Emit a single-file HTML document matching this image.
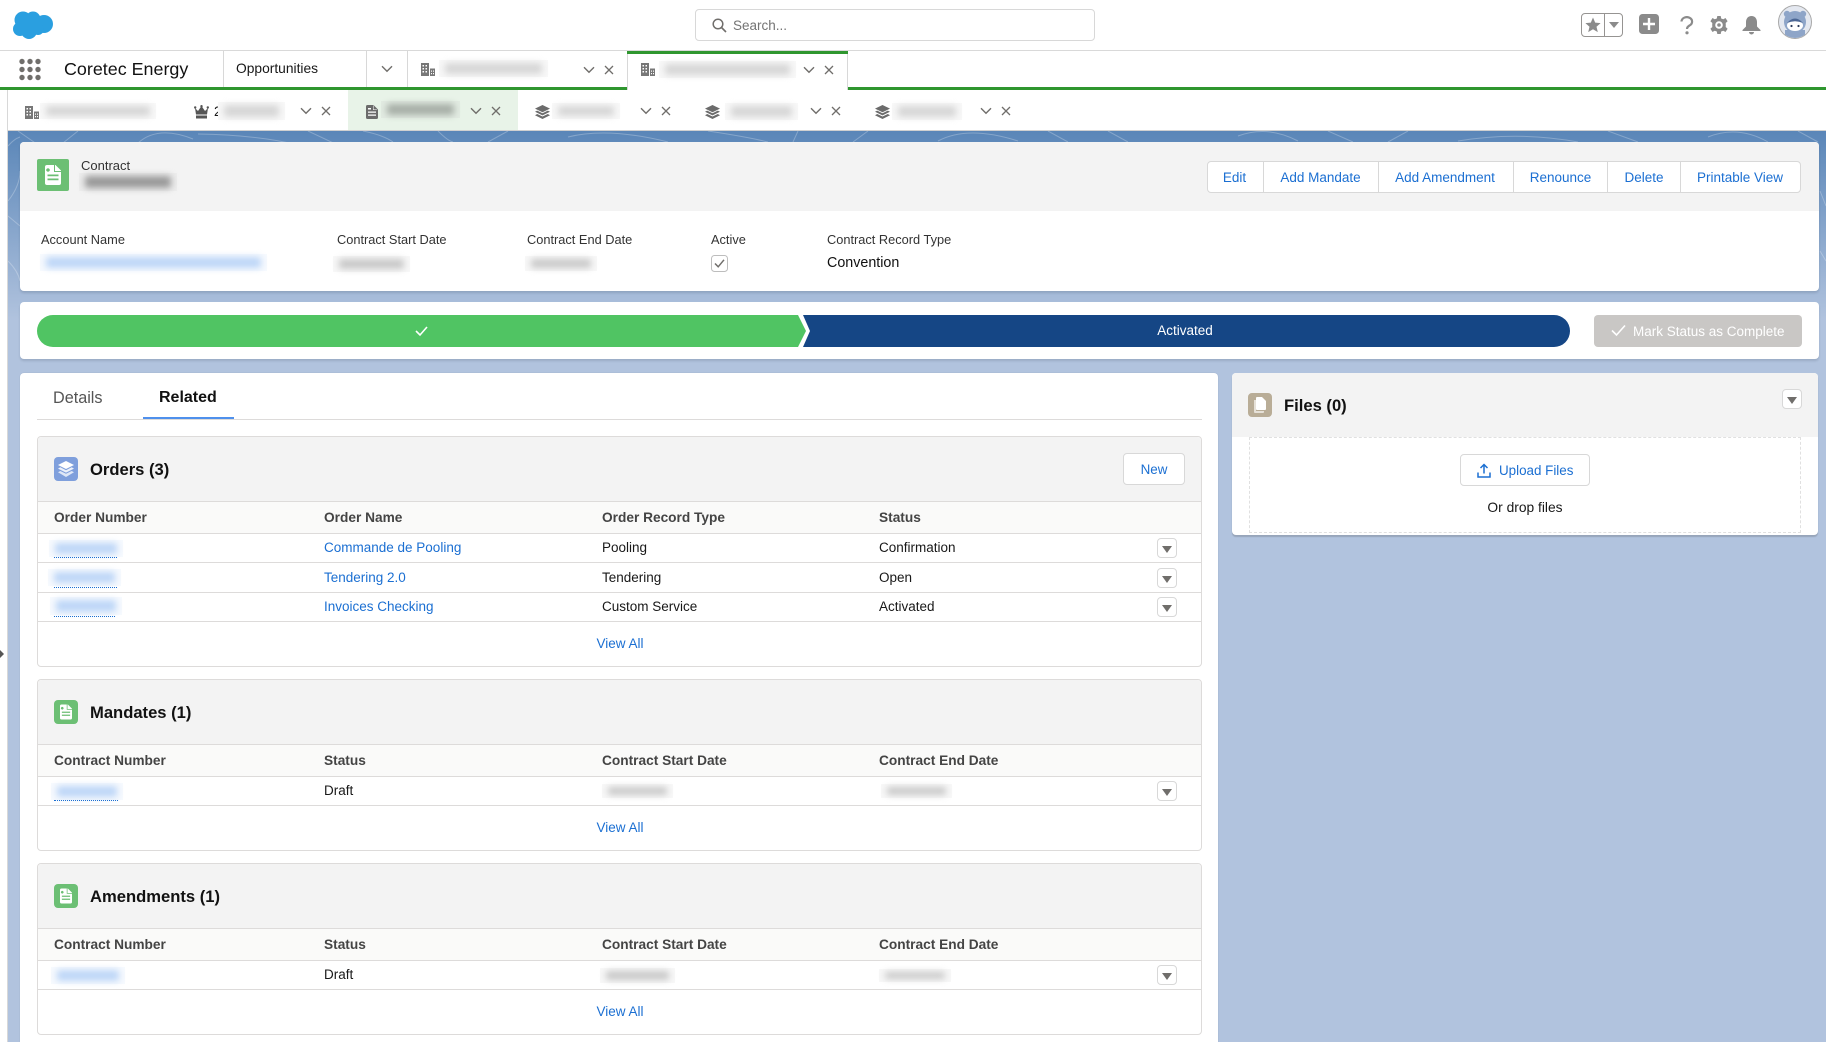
<!DOCTYPE html>
<html><head><meta charset="utf-8"><title>Contract</title>
<style>
html,body{margin:0;padding:0;background:#fff}
html{overflow:hidden}
body{position:relative;width:1826px;height:1042px;overflow:hidden;font-family:"Liberation Sans",sans-serif;font-size:13px;color:#181818}
div,span,i,a,svg{position:absolute;display:block}
.t{line-height:20px;white-space:nowrap;transform:translateY(1px)}
.lnk{color:#1b6fd2}
.t.h{font-weight:bold;color:#444;font-size:13.7px;transform:none}
.c{font-size:13.5px}
.t.lab{font-size:12.8px;color:#333;transform:none}
.t.ct{font-weight:bold;font-size:16.6px;color:#111;transform:translateY(1px)}
.bl{overflow:visible}
.bl::before{content:"";position:absolute;left:6px;right:6px;top:3px;bottom:3px;filter:blur(3.5px);background:var(--c,#c8c8c8);border-radius:2px}
.tb{background:#f8f8f8;--c:#d6d6d6}
.gr{background:#f8f8f8;--c:#c8c8c8}
.dk{background:#ededed;--c:#999}
.bu{background:#f7fafe;--c:#bdd6f7}
.card{background:#fff;border-radius:4px;box-shadow:0 2px 2px rgba(40,50,70,.16)}
.line{background:#dddbda;height:1px}
.sec{left:37px;width:1165px;background:#fff;border:1px solid #dddbda;border-radius:4px;box-sizing:border-box}
.band{left:38px;width:1163px;background:#f3f3f3}
.th{left:38px;width:1163px;background:#fafaf9}
.dd{width:20px;height:20px;box-sizing:border-box;background:#fff;border:1px solid #d8d8d8;border-radius:4px}
.dd::after{content:"";position:absolute;left:4px;top:7px;border-left:5px solid transparent;border-right:5px solid transparent;border-top:7px solid #706e6b}
.dot{left:54px;height:0;border-top:1px dotted #1b6fd2}
.btn{background:#fff;border:1px solid #d8d8d8;border-radius:4px;box-sizing:border-box}
.sep{width:1px;background:#d8d8d8}
.ic{border-radius:4px}
</style></head><body>

<svg width="0" height="0" style="left:0;top:0">
<defs>
<symbol id="chev" viewBox="0 0 12 8"><path d="M1 1.200L6 6.200L11 1.200" fill="none" stroke="#706e6b" stroke-width="1.400"/></symbol>
<symbol id="x" viewBox="0 0 10 10"><path d="M1 1L9 9M9 1L1 9" fill="none" stroke="#706e6b" stroke-width="1.300"/></symbol>
<symbol id="bld" viewBox="0 0 14 13"><path fill="#777" d="M0 0H8V13H0Z"/><path fill="#777" d="M9 5.500H14V13H9Z"/><path fill="#fff" d="M1.500 2H3V3.500H1.500ZM4.500 2H6V3.500H4.500ZM1.500 5H3V6.500H1.500ZM4.500 5H6V6.500H4.500ZM1.500 8H3V9.500H1.500ZM4.500 8H6V9.500H4.500ZM10 7.500H11V8.800H10ZM12 7.500H13V8.800H12ZM10 10H11V11.300H10ZM12 10H13V11.300H12Z"/></symbol>
<symbol id="stack" viewBox="0 0 15 14"><path fill="#6b6b6b" d="M7.500 0L15 3.600L7.500 7.200L0 3.600Z"/><path fill="#6b6b6b" d="M2.200 5.600L7.500 8.200L12.800 5.600L15 6.800L7.500 10.400L0 6.800Z"/><path fill="#6b6b6b" d="M2.200 9L7.500 11.500L12.800 9L15 10.200L7.500 14L0 10.200Z"/></symbol>
<symbol id="doc" viewBox="0 0 12 14"><path fill="#6b6b6b" d="M1.500 0H7.500L12 4.500V12.500A1.500 1.500 0 0 1 10.500 14H1.500A1.500 1.500 0 0 1 0 12.500V1.500A1.500 1.500 0 0 1 1.500 0Z"/><path fill="#fff" d="M2 6.500H10V7.700H2ZM2 9.500H10V10.700H2ZM2 3H5V4.500H2Z"/><path fill="#fff" d="M7.500 0.500V4.500H11.500L10.500 5H7V0.500Z"/></symbol>
<symbol id="wdoc" viewBox="0 0 16 20"><path fill="#fff" d="M2 0H10.500L16 5.500V18A2 2 0 0 1 14 20H2A2 2 0 0 1 0 18V2A2 2 0 0 1 2 0Z"/><path fill="currentColor" d="M2.500 9.500H13.500V11.200H2.500ZM2.500 13.500H13.500V15.200H2.500ZM3 3.200A1.800 1.800 0 1 0 3.010 3.200ZM10 0V6H16V7H9V0Z"/></symbol>
<symbol id="wstack" viewBox="0 0 16 16"><path fill="#fff" d="M8 0L16 4L8 8L0 4Z"/><path fill="#fff" d="M2.300 6.300L8 9.200L13.700 6.300L16 7.600L8 11.600L0 7.600Z" opacity=".85"/><path fill="#fff" d="M2.300 10L8 12.800L13.700 10L16 11.300L8 16L0 11.300Z" opacity=".75"/></symbol>
</defs></svg>

<!-- top bar -->
<svg style="left:10px;top:8px" width="46" height="34" viewBox="10 8 46 34"><g fill="#2a9fe0"><circle cx="23" cy="20" r="8.500"/><circle cx="33" cy="19" r="7.500"/><circle cx="44" cy="24" r="9"/><circle cx="20" cy="29" r="7"/><circle cx="29" cy="31" r="8"/><circle cx="38" cy="29" r="6"/><rect x="20" y="18" width="22" height="12"/></g></svg>

<div style="left:695px;top:9px;width:400px;height:32px;box-sizing:border-box;border:1px solid #d8d8d8;border-radius:4px;background:#fff"></div>
<svg style="left:712px;top:18px" width="15" height="15" viewBox="0 0 15 15"><circle cx="6" cy="6" r="4.800" fill="none" stroke="#706e6b" stroke-width="1.500"/><path d="M9.500 9.500L14 14" stroke="#706e6b" stroke-width="1.600"/></svg>
<span class="t" style="left:733px;top:15px;font-size:13.500px;color:#747474">Search...</span>

<!-- right icons -->
<div style="left:1581px;top:13px;width:42px;height:24px;box-sizing:border-box;border:1px solid #969492;border-radius:4px"></div>
<div class="sep" style="left:1604px;top:13px;height:24px;background:#969492"></div>
<svg style="left:1585px;top:17px" width="16" height="16" viewBox="0 0 16 16"><path fill="#8b8b8b" d="M8 0.500L10.200 5.600L15.600 6.100L11.500 9.700L12.800 15.100L8 12.200L3.200 15.100L4.500 9.700L0.400 6.100L5.800 5.600Z"/></svg>
<svg style="left:1609px;top:22px" width="10" height="7" viewBox="0 0 10 7"><path fill="#8b8b8b" d="M0 0H10L5 6Z"/></svg>
<svg style="left:1639px;top:14px" width="20" height="20" viewBox="0 0 20 20"><rect width="20" height="20" rx="3.500" fill="#8b8b8b"/><path d="M10 4V16M4 10H16" stroke="#fff" stroke-width="2.400"/></svg>
<svg style="left:1680px;top:16px" width="14" height="19" viewBox="0 0 14 19"><path d="M1.500 5.500A5.300 4.500 0 1 1 9.500 9.500C7.800 10.500 7 11.200 7 13" fill="none" stroke="#8b8b8b" stroke-width="2.200"/><circle cx="7" cy="16.800" r="1.600" fill="#8b8b8b"/></svg>
<svg style="left:1710px;top:16px" width="18" height="18" viewBox="0 0 18 18"><path fill="#8b8b8b" d="M7.300 0H10.700L11.200 2.500L13.300 3.300L15.500 2L17.600 5.300L15.700 7L15.800 9L15.700 11L17.600 12.700L15.500 16L13.300 14.700L11.200 15.500L10.700 18H7.300L6.800 15.500L4.700 14.700L2.500 16L0.400 12.700L2.300 11L2.200 9L2.300 7L0.400 5.300L2.500 2L4.700 3.300L6.800 2.500Z"/><circle cx="9" cy="9" r="3.800" fill="#fff"/><circle cx="9" cy="9" r="1.800" fill="#8b8b8b"/></svg>
<svg style="left:1742px;top:16px" width="19" height="19" viewBox="0 0 19 19"><path fill="#8b8b8b" d="M9.500 0C13 0 15 2.800 15 6V10.500L18.500 14V15H0.500V14L4 10.500V6C4 2.800 6 0 9.500 0ZM7 16H12A2.500 2.500 0 0 1 7 16Z"/></svg>
<svg style="left:1778px;top:5px" width="34" height="34" viewBox="0 0 34 34"><defs><clipPath id="av"><circle cx="17" cy="17" r="16"/></clipPath></defs><circle cx="17" cy="17" r="16.500" fill="#e4e8f0" stroke="#a8a8a8"/><g clip-path="url(#av)"><circle cx="9" cy="9" r="3.200" fill="#8ea5c8"/><circle cx="25" cy="9" r="3.200" fill="#8ea5c8"/><circle cx="17" cy="17" r="11" fill="#8ea5c8"/><rect x="7" y="25" width="20" height="9" fill="#8ea5c8"/><ellipse cx="17" cy="20.500" rx="8" ry="5.500" fill="#fff"/><path d="M9 18Q17 9 25 18Q17 14.500 9 18Z" fill="#4c6795"/><circle cx="13.500" cy="21" r="1.100" fill="#2b3b5b"/><circle cx="20.500" cy="21" r="1.100" fill="#2b3b5b"/></g></svg>

<div class="line" style="left:0;top:50px;width:1826px;height:1px;background:#d9d9d9"></div>

<!-- nav row -->
<svg style="left:18px;top:58px" width="24" height="24" viewBox="0 0 24 24"><g fill="#706e6b"><circle cx="4" cy="3.500" r="2.700"/><circle cx="12" cy="3.500" r="2.700"/><circle cx="20" cy="3.500" r="2.700"/><circle cx="4" cy="11.500" r="2.700"/><circle cx="12" cy="11.500" r="2.700"/><circle cx="20" cy="11.500" r="2.700"/><circle cx="4" cy="19.500" r="2.700"/><circle cx="12" cy="19.500" r="2.700"/><circle cx="20" cy="19.500" r="2.700"/></g></svg>
<span class="t" style="left:64px;top:59px;font-size:17.900px;color:#111;transform:none">Coretec Energy</span>
<div class="sep" style="left:223px;top:51px;height:36px"></div>
<span class="t" style="left:236px;top:58px;font-size:13.800px;color:#181818">Opportunities</span>
<div class="sep" style="left:366px;top:51px;height:36px"></div>
<svg style="left:381px;top:65px" width="12" height="8"><use href="#chev"/></svg>
<div class="sep" style="left:407px;top:51px;height:36px"></div>
<svg style="left:421px;top:63px" width="14" height="13"><use href="#bld"/></svg>
<i class="bl tb" style="left:439px;top:60px;width:109px;height:17px"></i>
<svg style="left:583px;top:66px" width="12" height="8"><use href="#chev"/></svg>
<svg style="left:604px;top:65px" width="10" height="10"><use href="#x"/></svg>

<div style="left:0;top:87px;width:1826px;height:3px;background:#2f962f"></div>
<div style="left:627px;top:51px;width:221px;height:39px;background:#fff;border-left:1px solid #d8d8d8;border-right:1px solid #d8d8d8;box-sizing:border-box"></div>
<div style="left:627px;top:51px;width:221px;height:3px;background:#2f962f"></div>
<svg style="left:641px;top:63px" width="14" height="13"><use href="#bld"/></svg>
<i class="bl tb" style="left:659px;top:61px;width:137px;height:17px"></i>
<svg style="left:803px;top:66px" width="12" height="8"><use href="#chev"/></svg>
<svg style="left:824px;top:65px" width="10" height="10"><use href="#x"/></svg>

<!-- sub tabs -->
<div style="left:7px;top:90px;width:1px;height:952px;background:#d8d8d8"></div>
<svg style="left:25px;top:106px" width="14" height="13"><use href="#bld"/></svg>
<i class="bl tb" style="left:40px;top:103px;width:116px;height:16px"></i>
<svg style="left:194px;top:105px" width="15" height="14" viewBox="0 0 15 14"><path fill="#555" d="M1 3L4 6L7.500 1L11 6L14 3L13 9.500H2Z"/><rect x="2" y="10.500" width="11" height="3" fill="#555"/><circle cx="1.200" cy="2.500" r="1.200" fill="#555"/><circle cx="7.500" cy="1.200" r="1.200" fill="#555"/><circle cx="13.800" cy="2.500" r="1.200" fill="#555"/></svg>
<span class="t" style="left:214px;top:101px;font-size:13.500px">2</span>
<i class="bl tb" style="left:218px;top:102px;width:67px;height:18px"></i>
<svg style="left:300px;top:107px" width="12" height="8"><use href="#chev"/></svg>
<svg style="left:321px;top:106px" width="10" height="10"><use href="#x"/></svg>

<div style="left:348px;top:90px;width:170px;height:40px;background:#e8f3e8"></div>
<svg style="left:366px;top:105px" width="12" height="14"><use href="#doc"/></svg>
<i class="bl" style="left:381px;top:101px;width:79px;height:17px;--c:#a6aea6;background:#e2ebe2"></i>
<svg style="left:470px;top:107px" width="12" height="8"><use href="#chev"/></svg>
<svg style="left:491px;top:106px" width="10" height="10"><use href="#x"/></svg>

<svg style="left:535px;top:105px" width="15" height="14"><use href="#stack"/></svg>
<i class="bl tb" style="left:552px;top:103px;width:68px;height:16px"></i>
<svg style="left:640px;top:107px" width="12" height="8"><use href="#chev"/></svg>
<svg style="left:661px;top:106px" width="10" height="10"><use href="#x"/></svg>

<svg style="left:705px;top:105px" width="15" height="14"><use href="#stack"/></svg>
<i class="bl tb" style="left:725px;top:103px;width:73px;height:17px"></i>
<svg style="left:810px;top:107px" width="12" height="8"><use href="#chev"/></svg>
<svg style="left:831px;top:106px" width="10" height="10"><use href="#x"/></svg>

<svg style="left:875px;top:105px" width="15" height="14"><use href="#stack"/></svg>
<i class="bl tb" style="left:892px;top:103px;width:70px;height:17px"></i>
<svg style="left:980px;top:107px" width="12" height="8"><use href="#chev"/></svg>
<svg style="left:1001px;top:106px" width="10" height="10"><use href="#x"/></svg>

<!-- background -->
<div style="left:8px;top:130px;width:1818px;height:912px;background:#b1c3de"></div>
<div style="left:8px;top:130px;width:1818px;height:1px;background:#d0d0d0"></div>
<div style="left:8px;top:131px;width:1818px;height:190px;background:linear-gradient(#5a86b8,#b1c3de)"></div>
<svg style="left:8px;top:131px" width="1818" height="190" viewBox="0 0 1818 190" fill="none" stroke="#fff" stroke-opacity=".26" stroke-width="1">
<path d="M10 0Q30 14 42 22M70 0L55 12M130 12Q150 -6 185 8M190 3Q250 4 290 14M300 0Q330 14 350 24M355 0Q375 4 385 11"/>
<path d="M430 0Q440 10 445 11M500 0L480 11M560 6Q600 -4 660 11M700 0Q740 6 760 11M790 0L785 11M860 0L845 11M930 10Q960 -6 1010 10M1040 0L1060 11M1100 0L1120 11M1230 5Q1260 -6 1290 10M1320 0L1345 11M1400 0L1380 11M1450 10Q1510 0 1570 11M1600 0L1630 11M1700 6Q1730 -6 1760 11M1790 0L1810 11"/>
<path d="M0 70Q12 55 12 40M0 130Q10 140 12 150M0 85L12 95M1812 60L1818 75M1812 120L1818 130M0 15Q6 8 12 6"/>
</svg>

<!-- header card -->
<div class="card" style="left:20px;top:142px;width:1799px;height:149px"></div>
<div style="left:20px;top:142px;width:1799px;height:69px;background:#f3f3f3;border-radius:4px 4px 0 0"></div>
<div class="ic" style="left:37px;top:159px;width:32px;height:32px;background:#6cbf74;border-radius:2px"></div>
<svg style="left:45px;top:165px;color:#6cbf74" width="16" height="20"><use href="#wdoc"/></svg>
<span class="t" style="left:81px;top:155px;font-size:13px;color:#333">Contract</span>
<i class="bl dk" style="left:79px;top:173px;width:98px;height:18px"></i>

<div class="btn" style="left:1207px;top:161px;width:594px;height:32px"></div>
<div class="sep" style="left:1263px;top:161px;height:32px"></div>
<div class="sep" style="left:1378px;top:161px;height:32px"></div>
<div class="sep" style="left:1513px;top:161px;height:32px"></div>
<div class="sep" style="left:1607px;top:161px;height:32px"></div>
<div class="sep" style="left:1680px;top:161px;height:32px"></div>
<span class="t lnk" style="left:1207px;width:55px;text-align:center;top:167px;font-size:13.500px">Edit</span>
<span class="t lnk" style="left:1263px;width:115px;text-align:center;top:167px;font-size:13.500px">Add Mandate</span>
<span class="t lnk" style="left:1378px;width:134px;text-align:center;top:167px;font-size:13.500px">Add Amendment</span>
<span class="t lnk" style="left:1514px;width:93px;text-align:center;top:167px;font-size:13.500px">Renounce</span>
<span class="t lnk" style="left:1608px;width:72px;text-align:center;top:167px;font-size:13.500px">Delete</span>
<span class="t lnk" style="left:1680px;width:120px;text-align:center;top:167px;font-size:13.500px">Printable View</span>

<span class="t lab" style="left:41px;top:230px">Account Name</span>
<span class="t lab" style="left:337px;top:230px">Contract Start Date</span>
<span class="t lab" style="left:527px;top:230px">Contract End Date</span>
<span class="t lab" style="left:711px;top:230px">Active</span>
<span class="t lab" style="left:827px;top:230px">Contract Record Type</span>
<i class="bl bu" style="left:40px;top:254px;width:227px;height:17px"></i>
<i class="bl gr" style="left:333px;top:256px;width:77px;height:16px"></i>
<i class="bl gr" style="left:525px;top:256px;width:72px;height:15px"></i>
<svg style="left:711px;top:255px" width="17" height="17" viewBox="0 0 17 17"><rect x=".5" y=".5" width="16" height="16" rx="3" fill="#fff" stroke="#bdbdbd"/><path d="M4 8.500L7.200 11.800L13 4.800" fill="none" stroke="#706e6b" stroke-width="1.500"/></svg>
<span class="t" style="left:827px;top:252px;font-size:14.300px;color:#111">Convention</span>

<!-- path card -->
<div class="card" style="left:20px;top:302px;width:1799px;height:57px"></div>
<svg style="left:0;top:300px" width="1826" height="60" viewBox="0 300 1826 60"><path fill="#50c463" d="M53 315H798L806 331L798 347H53A16 16 0 0 1 53 315Z"/><path fill="#154685" d="M803 315H1554A16 16 0 0 1 1554 347H803L810 331Z"/><path d="M416 331L420 335L427 327" fill="none" stroke="#fff" stroke-width="1.600"/></svg>
<span class="t" style="left:1085px;width:200px;text-align:center;top:320px;font-size:13.500px;color:#fff">Activated</span>
<div style="left:1594px;top:315px;width:208px;height:32px;background:#c9c7c5;border-radius:4px"></div>
<svg style="left:1611px;top:324px" width="15" height="13" viewBox="0 0 15 13"><path d="M1 6.500L5.500 11L14 1.500" fill="none" stroke="#fff" stroke-width="1.600"/></svg>
<span class="t" style="left:1633px;top:321px;font-size:13.500px;color:#fff">Mark Status as Complete</span>

<!-- main card -->
<div class="card" style="left:20px;top:373px;width:1198px;height:669px;border-radius:4px 4px 0 0;box-shadow:0 0 1px rgba(40,50,70,.2)"></div>
<span class="t" style="left:53px;top:387px;font-size:16.200px;color:#555">Details</span>
<span class="t" style="left:159px;top:387px;font-size:16px;font-weight:bold;color:#111">Related</span>
<div class="line" style="left:37px;top:419px;width:1165px"></div>
<div style="left:143px;top:417px;width:91px;height:2px;background:#4f90ec"></div>

<!-- orders -->
<div class="sec" style="top:436px;height:231px"></div>
<div class="band" style="top:437px;height:64px;border-radius:4px 4px 0 0"></div>
<div class="line" style="left:38px;top:501px;width:1163px"></div>
<div class="ic" style="left:54px;top:457px;width:24px;height:24px;background:#7f9fdc"></div>
<svg style="left:58px;top:461px" width="16" height="16"><use href="#wstack"/></svg>
<span class="t ct" style="left:90px;top:459px">Orders (3)</span>
<div class="btn" style="left:1123px;top:453px;width:62px;height:32px"></div>
<span class="t lnk" style="left:1123px;width:62px;text-align:center;top:459px;font-size:13.400px">New</span>
<div class="th" style="top:502px;height:31px"></div>
<div class="line" style="left:38px;top:533px;width:1163px"></div>
<span class="t h" style="left:54px;top:508px">Order Number</span>
<span class="t h" style="left:324px;top:508px">Order Name</span>
<span class="t h" style="left:602px;top:508px">Order Record Type</span>
<span class="t h" style="left:879px;top:508px">Status</span>

<i class="bl bu" style="left:49px;top:540px;width:74px;height:17px"></i>
<div class="dot" style="top:557px;width:63px"></div>
<span class="t c lnk" style="left:324px;top:537px">Commande de Pooling</span>
<span class="t c" style="left:602px;top:537px">Pooling</span>
<span class="t c" style="left:879px;top:537px">Confirmation</span>
<i class="dd" style="left:1157px;top:538px"></i>
<div class="line" style="left:38px;top:562px;width:1163px"></div>

<i class="bl bu" style="left:48px;top:569px;width:73px;height:17px"></i>
<div class="dot" style="top:587px;width:63px"></div>
<span class="t c lnk" style="left:324px;top:567px">Tendering 2.0</span>
<span class="t c" style="left:602px;top:567px">Tendering</span>
<span class="t c" style="left:879px;top:567px">Open</span>
<i class="dd" style="left:1157px;top:568px"></i>
<div class="line" style="left:38px;top:592px;width:1163px"></div>

<i class="bl bu" style="left:50px;top:597px;width:72px;height:18px"></i>
<div class="dot" style="top:616px;width:61px"></div>
<span class="t c lnk" style="left:324px;top:596px">Invoices Checking</span>
<span class="t c" style="left:602px;top:596px">Custom Service</span>
<span class="t c" style="left:879px;top:596px">Activated</span>
<i class="dd" style="left:1157px;top:597px"></i>
<div class="line" style="left:38px;top:621px;width:1163px"></div>
<span class="t c lnk" style="left:520px;width:200px;text-align:center;top:633px">View All</span>

<!-- mandates -->
<div class="sec" style="top:679px;height:172px"></div>
<div class="band" style="top:680px;height:64px;border-radius:4px 4px 0 0"></div>
<div class="line" style="left:38px;top:744px;width:1163px"></div>
<div class="ic" style="left:54px;top:700px;width:24px;height:24px;background:#6cbf74"></div>
<svg style="left:60px;top:704px;color:#6cbf74" width="12" height="16"><use href="#wdoc"/></svg>
<span class="t ct" style="left:90px;top:702px">Mandates (1)</span>
<div class="th" style="top:745px;height:31px"></div>
<div class="line" style="left:38px;top:776px;width:1163px"></div>
<span class="t h" style="left:54px;top:751px">Contract Number</span>
<span class="t h" style="left:324px;top:751px">Status</span>
<span class="t h" style="left:602px;top:751px">Contract Start Date</span>
<span class="t h" style="left:879px;top:751px">Contract End Date</span>
<i class="bl bu" style="left:51px;top:783px;width:72px;height:17px"></i>
<div class="dot" style="top:800px;width:64px"></div>
<span class="t c" style="left:324px;top:780px">Draft</span>
<i class="bl gr" style="left:602px;top:784px;width:71px;height:14px"></i>
<i class="bl gr" style="left:881px;top:784px;width:71px;height:14px"></i>
<i class="dd" style="left:1157px;top:781px"></i>
<div class="line" style="left:38px;top:805px;width:1163px"></div>
<span class="t c lnk" style="left:520px;width:200px;text-align:center;top:817px">View All</span>

<!-- amendments -->
<div class="sec" style="top:863px;height:172px"></div>
<div class="band" style="top:864px;height:64px;border-radius:4px 4px 0 0"></div>
<div class="line" style="left:38px;top:928px;width:1163px"></div>
<div class="ic" style="left:54px;top:884px;width:24px;height:24px;background:#6cbf74"></div>
<svg style="left:60px;top:888px;color:#6cbf74" width="12" height="16"><use href="#wdoc"/></svg>
<span class="t ct" style="left:90px;top:886px">Amendments (1)</span>
<div class="th" style="top:929px;height:31px"></div>
<div class="line" style="left:38px;top:960px;width:1163px"></div>
<span class="t h" style="left:54px;top:935px">Contract Number</span>
<span class="t h" style="left:324px;top:935px">Status</span>
<span class="t h" style="left:602px;top:935px">Contract Start Date</span>
<span class="t h" style="left:879px;top:935px">Contract End Date</span>
<i class="bl bu" style="left:51px;top:967px;width:74px;height:17px"></i>
<span class="t c" style="left:324px;top:964px">Draft</span>
<i class="bl gr" style="left:600px;top:968px;width:75px;height:15px"></i>
<i class="bl gr" style="left:879px;top:969px;width:72px;height:13px"></i>
<i class="dd" style="left:1157px;top:965px"></i>
<div class="line" style="left:38px;top:989px;width:1163px"></div>
<span class="t c lnk" style="left:520px;width:200px;text-align:center;top:1001px">View All</span>

<!-- files card -->
<div class="card" style="left:1232px;top:373px;width:586px;height:162px;box-shadow:0 2px 1px rgba(60,60,60,.22)"></div>
<div style="left:1232px;top:373px;width:586px;height:64px;background:#f3f3f3;border-radius:4px 4px 0 0"></div>
<div style="left:1249px;top:437px;width:552px;height:96px;box-sizing:border-box;border:1px dashed #e0e0e0"></div>
<div class="ic" style="left:1248px;top:393px;width:24px;height:24px;background:#b9ad97"></div>
<svg style="left:1253px;top:397px" width="14" height="16" viewBox="0 0 14 16"><path fill="#e6e1d8" d="M1 3H3V14H11V15A1 1 0 0 1 10 16H2A1 1 0 0 1 1 15Z"/><path fill="#fff" d="M4 0H9L13 4V12A1 1 0 0 1 12 13H4A1 1 0 0 1 3 12V1A1 1 0 0 1 4 0Z"/></svg>
<span class="t ct" style="left:1284px;top:395px">Files (0)</span>
<i class="dd" style="left:1782px;top:389px"></i>
<div class="btn" style="left:1460px;top:454px;width:130px;height:32px"></div>
<svg style="left:1477px;top:463px" width="14" height="15" viewBox="0 0 14 15"><path d="M7 10.500V1.500M3.500 5L7 1.500L10.500 5" fill="none" stroke="#1b6fd2" stroke-width="1.500"/><path d="M1 9.500V14H13V9.500" fill="none" stroke="#1b6fd2" stroke-width="1.500"/></svg>
<span class="t lnk" style="left:1499px;top:460px;font-size:13.400px">Upload Files</span>
<span class="t" style="left:1425px;width:200px;text-align:center;top:498px;font-size:13.800px;transform:none">Or drop files</span>

<!-- left edge handle -->
<svg style="left:0;top:650px" width="4" height="8" viewBox="0 0 4 8"><path fill="#555" d="M0 0L4 4L0 8Z"/></svg>

</body></html>
